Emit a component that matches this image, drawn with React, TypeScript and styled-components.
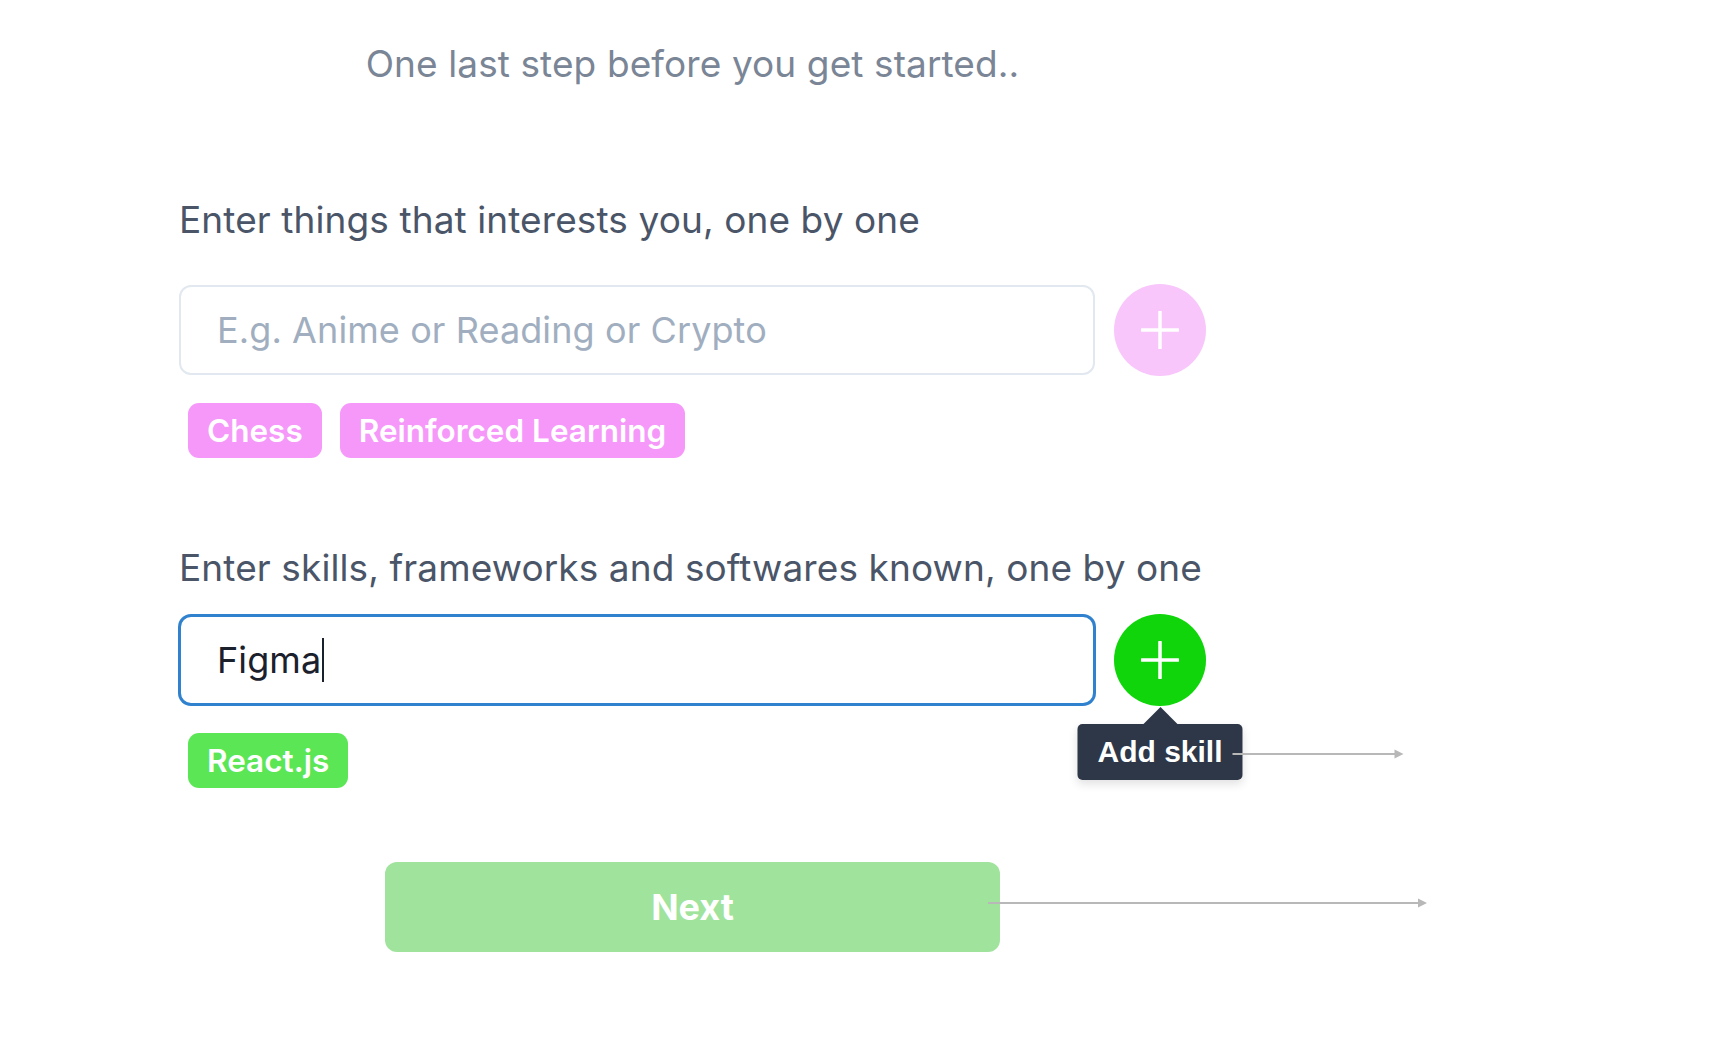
import React from "react";
import styled, { createGlobalStyle } from "styled-components";

const GlobalStyle = createGlobalStyle`
  html, body { margin: 0; padding: 0; background: #ffffff; }
  body { font-family: Inter, "Noto Sans", sans-serif; }
  * { box-sizing: border-box; }
`;

const Page = styled.main`
  width: 1027px;
  margin-left: 179px;
  padding-top: 42px;
  display: flex;
  flex-direction: column;
`;

const Title = styled.h1`
  margin: 0;
  font-size: 37px;
  line-height: 44px;
  font-weight: 400;
  letter-spacing: 0.1px;
  color: #7a8596;
  text-align: center;
`;

const Label = styled.label<{ $top: number }>`
  display: block;
  margin-top: ${(p) => p.$top}px;
  font-size: 37px;
  line-height: 44px;
  font-weight: 400;
  letter-spacing: 0.1px;
  color: #4a5568;
`;

const InputRow = styled.div<{ $top: number }>`
  display: flex;
  align-items: center;
  gap: 19px;
  margin-top: ${(p) => p.$top}px;
`;

const Field = styled.div`
  position: relative;
  flex: none;
`;

const TextInput = styled.input<{ $focused?: boolean }>`
  display: block;
  width: 916px;
  height: 90px;
  padding: 0 36px;
  border: 2px solid ${(p) => (p.$focused ? "#3182ce" : "#e2e8f0")};
  border-radius: 12px;
  box-shadow: ${(p) => (p.$focused ? "0 0 0 1px #3182ce" : "none")};
  font-family: Inter, "Noto Sans", sans-serif;
  font-size: 36px;
  letter-spacing: 0.1px;
  color: #1a202c;
  caret-color: transparent;
  outline: none;
  background: #fff;
  &::placeholder { color: #a0aec0; }
`;

const Caret = styled.span<{ $left: number }>`
  position: absolute;
  left: ${(p) => p.$left}px;
  top: 23px;
  width: 2px;
  height: 44px;
  background: #1a202c;
  pointer-events: none;
`;

const ButtonWrap = styled.div`
  position: relative;
  flex: none;
`;

const RoundButton = styled.button<{ $bg: string }>`
  width: 92px;
  height: 92px;
  border-radius: 50%;
  border: none;
  padding: 0;
  background: ${(p) => p.$bg};
  display: flex;
  align-items: center;
  justify-content: center;
  cursor: pointer;
`;

const Tooltip = styled.div`
  position: absolute;
  top: calc(100% + 18px);
  left: 50%;
  transform: translateX(-50%);
  height: 56px;
  padding: 0 20px;
  display: flex;
  align-items: center;
  background: #2d3748;
  color: #ffffff;
  border-radius: 5px;
  font-family: "Liberation Sans", Arial, sans-serif;
  font-weight: 700;
  font-size: 30px;
  white-space: nowrap;
  box-shadow: 0 4px 10px rgba(0, 0, 0, 0.12);
  &::before {
    content: "";
    position: absolute;
    top: -12px;
    left: calc(50% - 12px);
    width: 24px;
    height: 24px;
    background: #2d3748;
    transform: rotate(45deg);
  }
`;

const TooltipText = styled.span`
  position: relative;
`;

const Pointer = styled.svg<{ $inset: number; $dy: number }>`
  position: absolute;
  left: calc(100% - ${(p) => p.$inset}px);
  top: calc(50% - 6px + ${(p) => p.$dy}px);
  overflow: visible;
  pointer-events: none;
`;

const TagRow = styled.div<{ $top: number }>`
  display: flex;
  gap: 18px;
  margin-top: ${(p) => p.$top}px;
  margin-left: 9px;
`;

const Tag = styled.span<{ $bg: string }>`
  height: 55px;
  padding: 0 19px;
  display: inline-flex;
  align-items: center;
  border-radius: 11px;
  background: ${(p) => p.$bg};
  color: #ffffff;
  font-size: 31.5px;
  font-weight: 600;
  line-height: 1;
`;

const NextWrap = styled.div`
  position: relative;
  align-self: center;
  margin-top: 74px;
`;

const NextButton = styled.button`
  width: 615px;
  height: 90px;
  border: none;
  border-radius: 12px;
  background: #a0e39c;
  color: #ffffff;
  font-family: Inter, "Noto Sans", sans-serif;
  font-size: 36px;
  font-weight: 700;
  cursor: not-allowed;
`;

const PlusIcon = () => (
  <svg width="38" height="38" viewBox="0 0 38 38">
    <path d="M19 1v36M1 19h36" stroke="#ffffff" strokeWidth="3.5" strokeLinecap="round" />
  </svg>
);

const Arrow = ({ length, inset, dy = 0 }: { length: number; inset: number; dy?: number }) => (
  <Pointer $inset={inset} $dy={dy} width={length} height={12} viewBox={`0 0 ${length} 12`}>
    <line x1="0" y1="6" x2={length - 8} y2="6" stroke="#b8b8b8" strokeWidth="2" />
    <path d={`M${length - 9} 1.5 L${length} 6 L${length - 9} 10.5 Z`} fill="#b8b8b8" />
  </Pointer>
);

export default function App() {
  return (
    <>
      <GlobalStyle />
      <Page>
        <Title>One last step before you get started..</Title>

        <Label $top={112} htmlFor="interests">Enter things that interests you, one by one</Label>
        <InputRow $top={42}>
          <Field>
            <TextInput id="interests" placeholder="E.g. Anime or Reading or Crypto" />
          </Field>
          <ButtonWrap>
            <RoundButton $bg="#f8c6fb" aria-label="Add interest">
              <PlusIcon />
            </RoundButton>
          </ButtonWrap>
        </InputRow>
        <TagRow $top={27}>
          <Tag $bg="#f598f9">Chess</Tag>
          <Tag $bg="#f598f9">Reinforced Learning</Tag>
        </TagRow>

        <Label $top={88} htmlFor="skills">Enter skills, frameworks and softwares known, one by one</Label>
        <InputRow $top={24}>
          <Field>
            <TextInput id="skills" $focused defaultValue="Figma" />
            <Caret $left={143} />
          </Field>
          <ButtonWrap>
            <RoundButton $bg="#10d50a" aria-label="Add skill">
              <PlusIcon />
            </RoundButton>
            <Tooltip>
              <TooltipText>Add skill</TooltipText>
              <Arrow length={171} inset={10} dy={2} />
            </Tooltip>
          </ButtonWrap>
        </InputRow>
        <TagRow $top={27}>
          <Tag $bg="#5be655">React.js</Tag>
        </TagRow>

        <NextWrap>
          <NextButton disabled>Next</NextButton>
          <Arrow length={439} inset={12} dy={-4} />
        </NextWrap>
      </Page>
    </>
  );
}
